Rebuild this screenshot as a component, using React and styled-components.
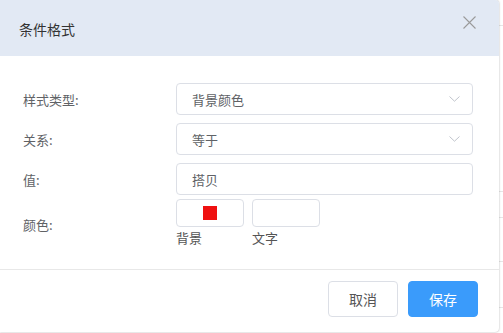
import React from 'react'
import styled, { createGlobalStyle } from 'styled-components'

const GlobalStyle = createGlobalStyle`
    html, body {
        margin: 0;
        padding: 0;
        background: #fff;
        font-family: 'Noto Sans CJK SC', 'Noto Sans', sans-serif;
    }
`

const fields = [
    { label: '样式类型:', value: '背景颜色', select: true },
    { label: '关系:', value: '等于', select: true },
    { label: '值:', value: '搭贝', select: false },
]

const Chevron = () => (
    <svg width='11' height='6' viewBox='0 0 11 6' fill='none'>
        <path d='M0.5 0.5 L5.5 5.2 L10.5 0.5' stroke='#c0c4cc' strokeWidth='1' />
    </svg>
)

const CloseIcon = () => (
    <svg width='13' height='13' viewBox='0 0 13 13' fill='none'>
        <path d='M0.5 0.5 L12.5 12.5 M12.5 0.5 L0.5 12.5' stroke='#9a9a9a' strokeWidth='1.1' />
    </svg>
)

const App = () => {
    return (
        <Page>
            <GlobalStyle />
            <BackTable>
                <BackRow $h={25} />
                <BackRow $h={165} />
                <BackRow $h={25} />
                <BackRow $h={43} />
                <BackRow $h={45} />
            </BackTable>
            <Dialog>
                <Header>
                    <Title>条件格式</Title>
                    <CloseButton>
                        <CloseIcon />
                    </CloseButton>
                </Header>
                <Body>
                    {fields.map((f) => (
                        <Field key={f.label}>
                            <Label>{f.label}</Label>
                            <Input>
                                <span>{f.value}</span>
                                {f.select && <Chevron />}
                            </Input>
                        </Field>
                    ))}
                    <ColorField>
                        <Label>颜色:</Label>
                        <Swatches>
                            <SwatchItem>
                                <SwatchBox>
                                    <Chip $color='#ef1111' />
                                </SwatchBox>
                                <Caption>背景</Caption>
                            </SwatchItem>
                            <SwatchItem>
                                <SwatchBox />
                                <Caption>文字</Caption>
                            </SwatchItem>
                        </Swatches>
                    </ColorField>
                </Body>
                <Footer>
                    <Button>取消</Button>
                    <Button $primary>保存</Button>
                </Footer>
            </Dialog>
        </Page>
    )
}

const Page = styled.div`
    position: relative;
    width: 503px;
    height: 333px;
    overflow: hidden;
    background: #fff;
`

const BackTable = styled.div`
    display: flex;
    flex-direction: column;
    padding-left: 497px;
`

const BackRow = styled.div`
    height: ${({ $h }) => $h}px;
    border-bottom: 1px solid #e6e6e6;
`

const Dialog = styled.div`
    position: absolute;
    top: 0;
    left: 0;
    width: 499px;
    height: 332px;
    display: flex;
    flex-direction: column;
    background: #fff;
    border-radius: 0 4px 4px 0;
    box-shadow: 0 0 2px rgba(0, 0, 0, 0.35);
    overflow: hidden;
`

const Header = styled.div`
    height: 56px;
    flex-shrink: 0;
    display: flex;
    align-items: center;
    justify-content: space-between;
    padding: 0 23px 0 19px;
    background: #e2e9f4;
`

const Title = styled.div`
    font-size: 14px;
    color: #333;
    line-height: 1;
    margin-top: 1px;
`

const CloseButton = styled.div`
    display: flex;
    margin-top: -12px;
`

const Body = styled.div`
    flex: 1;
    padding: 27px 26px 0 23px;
`

const Field = styled.div`
    display: flex;
    align-items: center;
    margin-bottom: 8px;

    &:nth-child(3) {
        margin-bottom: 4px;
    }
`

const Label = styled.div`
    width: 153px;
    flex-shrink: 0;
    font-size: 13px;
    color: #606266;
`

const Input = styled.div`
    flex: 1;
    height: 32px;
    box-sizing: border-box;
    display: flex;
    align-items: center;
    justify-content: space-between;
    padding: 0 12px 0 15px;
    border: 1px solid #dcdfe6;
    border-radius: 4px;
    font-size: 13px;
    color: #606266;
`

const ColorField = styled.div`
    display: flex;
    align-items: center;
`

const Swatches = styled.div`
    display: flex;
    gap: 8px;
`

const SwatchItem = styled.div`
    display: flex;
    flex-direction: column;
`

const SwatchBox = styled.div`
    width: 68px;
    height: 28px;
    box-sizing: border-box;
    display: flex;
    align-items: center;
    justify-content: center;
    border: 1px solid #dcdfe6;
    border-radius: 4px;
`

const Chip = styled.div`
    width: 14px;
    height: 14px;
    background: ${({ $color }) => $color};
`

const Caption = styled.div`
    font-size: 13px;
    line-height: 22px;
    color: #555;
`

const Footer = styled.div`
    height: 63px;
    box-sizing: border-box;
    display: flex;
    justify-content: flex-end;
    gap: 10px;
    padding: 11px 21px 0 0;
    border-top: 1px solid #e8e8e8;
`

const Button = styled.div`
    width: 70px;
    height: 36px;
    box-sizing: border-box;
    display: flex;
    align-items: center;
    justify-content: center;
    font-size: 14px;
    border-radius: 4px;
    border: 1px solid ${({ $primary }) => ($primary ? '#3a9bfb' : '#dcdfe6')};
    background: ${({ $primary }) => ($primary ? '#3a9bfb' : '#fff')};
    color: ${({ $primary }) => ($primary ? '#fff' : '#555')};
`

export default App
